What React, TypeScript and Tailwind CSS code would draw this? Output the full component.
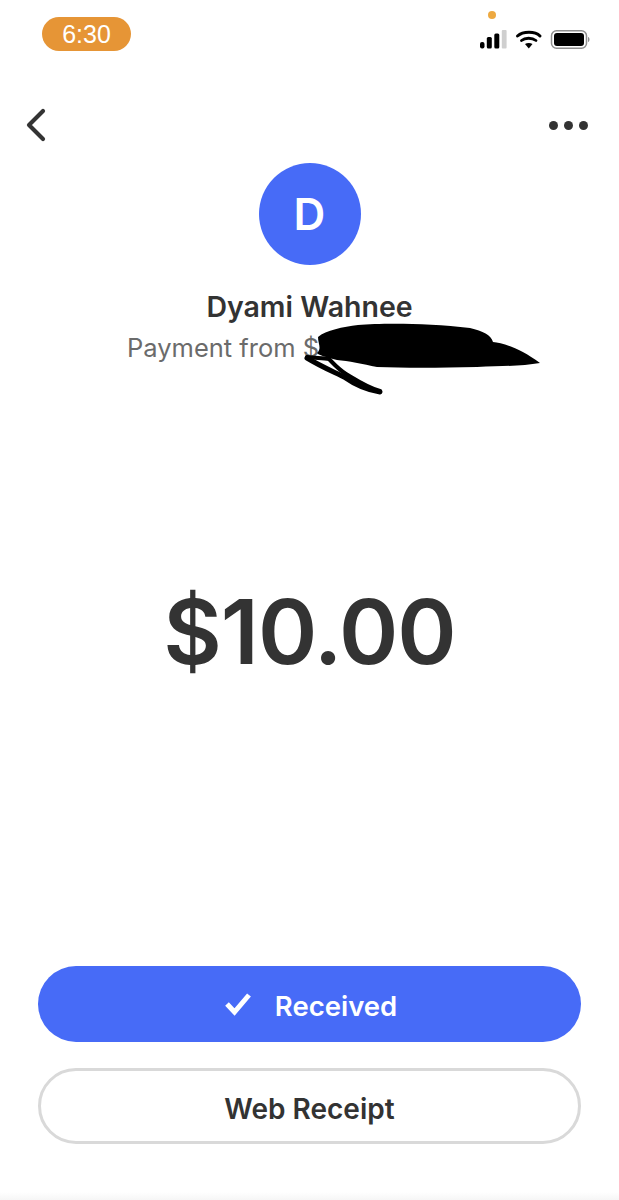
import React from 'react';

const font = { fontFamily: 'Inter, "Liberation Sans", sans-serif' };

function StatusIcons() {
  return (
    <svg width="111" height="19" viewBox="0 0 111 19" className="mt-[13px]">
      {/* signal */}
      <rect x="0" y="12" width="4.500" height="6.500" rx="2" fill="#000" />
      <rect x="6.800" y="7" width="5" height="11.500" rx="1.500" fill="#000" />
      <rect x="14.300" y="3.500" width="5" height="15" rx="1.500" fill="#000" />
      <rect x="21.800" y="0" width="4.800" height="18.500" rx="1" fill="#cfcfcf" />
      {/* wifi */}
      <path d="M37.500 6 C43 1 55 1 60 6" fill="none" stroke="#000" strokeWidth="3" strokeLinecap="round" />
      <path d="M41.500 10.500 C45 7.500 52 7.500 56 10.500" fill="none" stroke="#000" strokeWidth="2.800" strokeLinecap="round" />
      <path d="M45 14 C47 12.500 50.500 12.500 52.500 14 L48.800 18.500 Z" fill="#000" />
      {/* battery */}
      <rect x="71.500" y="0.750" width="35" height="17.500" rx="5" fill="none" stroke="#8f8f8f" strokeWidth="1.500" />
      <rect x="74" y="3" width="30" height="13" rx="3" fill="#000" />
      <path d="M108 7 C110 7.500 110 11.500 108 12 Z" fill="#8f8f8f" />
    </svg>
  );
}

// redaction scrawl drawn over the handle
function Scribble() {
  return (
    <svg width="250" height="80" viewBox="0 0 250 80" className="absolute left-[298px] top-[320px]">
      <path
        d="M20 17 C28 10 45 7 60 5 C85 3 130 3 172 8 C185 11 193 15 195 22 C205 23 222 28 242 43 C225 46 205 46 179 47 C140 48 105 48 79 47 C65 44 50 41 39 40 C28 37 20 35 19 33 C24 28 20 24 20 17 Z"
        fill="#000"
      />
      <path d="M9 37 C18 38 26 38 31 39 C36 44 40 49 48 54 C58 60 70 68 82 71" fill="none" stroke="#000" strokeWidth="4" strokeLinecap="round" />
      <path d="M9 38 C22 46 36 52 46 57 C56 64 68 70 82 72" fill="none" stroke="#000" strokeWidth="5" strokeLinecap="round" />
    </svg>
  );
}

export default function App() {
  return (
    <div className="relative w-[619px] h-[1200px] bg-white overflow-hidden flex flex-col" style={font}>
      {/* status bar */}
      <div className="flex justify-between items-start pl-[42px] pr-[28px] pt-[17px] h-[100px]">
        <div className="w-[89px] h-[34px] rounded-full bg-[#e69536] text-white text-[25px] pt-[1px] flex items-center justify-center" style={{ fontFamily: '"Liberation Sans", sans-serif' }}>
          6:30
        </div>
        <StatusIcons />
      </div>
      <div className="absolute left-[488px] top-[11px] w-[8px] h-[8px] rounded-full bg-[#eda941]" />

      {/* nav */}
      <div className="flex justify-between items-center pl-[25px] pr-[31px] h-[50px]">
        <svg width="22" height="34" viewBox="0 0 22 34">
          <path d="M18 3 L4 17 L18 31" fill="none" stroke="#333" strokeWidth="4.200" strokeLinecap="round" strokeLinejoin="round" />
        </svg>
        <div className="flex gap-[6px]">
          <div className="w-[9px] h-[9px] rounded-full bg-[#333]" />
          <div className="w-[9px] h-[9px] rounded-full bg-[#333]" />
          <div className="w-[9px] h-[9px] rounded-full bg-[#333]" />
        </div>
      </div>

      {/* payment header */}
      <div className="flex flex-col items-center mt-[13px]">
        <div className="w-[102px] h-[102px] rounded-full bg-[#476bf7] text-white text-[44px] font-semibold flex items-center justify-center">
          D
        </div>
        <div className="mt-[24px] text-[28.500px] leading-[36px] font-semibold text-[#333]">Dyami Wahnee</div>
        <div className="self-start ml-[127px] mt-[6px] text-[25.500px] leading-[34px] text-[#6b6b6b]">Payment from $</div>
      </div>
      <Scribble />

      {/* amount */}
      <div className="text-center mt-[217px] text-[90px] leading-[100px] tracking-[-1px] font-semibold text-[#333]">$10.00</div>

      {/* actions */}
      <div className="flex flex-col gap-[26px] px-[38px] mt-auto mb-[56px]">
        <button className="h-[76px] rounded-full bg-[#476bf7] text-white text-[27.500px] font-semibold flex items-center justify-center gap-[23px] pl-[3px]">
          <svg width="27" height="24" viewBox="0 0 27 24">
            <path d="M2 12 L9.500 20 L24 3" fill="none" stroke="#fff" strokeWidth="5" strokeLinejoin="miter" />
          </svg>
          <span className="pt-[5px]">Received</span>
        </button>
        <button className="h-[76px] rounded-full bg-white border-[3px] border-[#d9d9d9] text-[#333] text-[28px] font-semibold">
          <span className="block pt-[5px]">Web Receipt</span>
        </button>
      </div>
      <div className="absolute left-0 right-0 bottom-0 h-[8px] bg-gradient-to-b from-white to-[#f6f6f6]" />
    </div>
  );
}
